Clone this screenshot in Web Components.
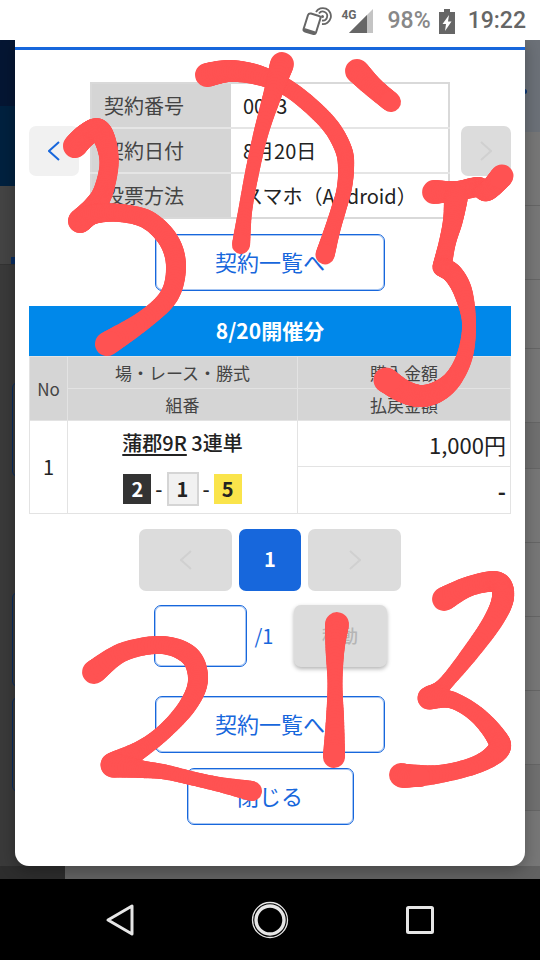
<!DOCTYPE html>
<html lang="ja">
<head>
  <meta charset="UTF-8">
  <meta name="viewport" content="width=device-width, initial-scale=1">
  <title>契約内容</title>
  <style>
    body {
      margin: 0;
      min-height: 100vh;
      display: flex;
      flex-direction: column;
      position: relative;
      background: #fff;
      color: #222;
      font-family: "Noto Sans CJK JP", sans-serif;
      font-size: 20px;
      line-height: 28px;
      --blue: #1767dc;
      --blue-soft: #a8c6f2;
    }

    main {
      flex: 1;
      display: grid;
      overflow: hidden;
    }

    page-backdrop,
    modal-sheet {
      grid-area: 1 / 1;
    }
  </style>
</head>
<body>
  <status-bar battery="98%" time="19:22"></status-bar>
  <main>
    <page-backdrop></page-backdrop>
    <modal-sheet>
      <contract-info number="0003" date="8月20日" method="スマホ（Android）"></contract-info>
      <outline-button>契約一覧へ</outline-button>
      <bet-list>
        <span slot="title">8/20開催分</span>
      </bet-list>
      <page-nav></page-nav>
      <outline-button>契約一覧へ</outline-button>
      <outline-button size="small">閉じる</outline-button>
    </modal-sheet>
  </main>
  <system-nav></system-nav>
  <ink-layer></ink-layer>

  <script>
    class BaseElement extends HTMLElement {
      constructor() {
        super();
        this.attachShadow({ mode: "open" });
      }

      connectedCallback() {
        const template = document.createElement("template");
        template.innerHTML = this.getStyles() + this.getTemplate();
        this.shadowRoot.appendChild(template.content.cloneNode(true));
      }
    }

    class StatusBar extends BaseElement {
      getStyles() {
        return `
          <style>
            :host {
              display: flex;
              justify-content: flex-end;
              align-items: center;
              height: 40px;
              padding: 2px 14px 0;
              box-sizing: border-box;
              font-family: Roboto, sans-serif;
              font-size: 23px;
              font-weight: 500;
              color: #666;
              background: #fff;
            }
            svg { display: block; }
            .signal { display: flex; align-items: flex-start; margin: 0 15px 0 9px; }
            .signal small { font-size: 12px; font-weight: bold; line-height: 12px; }
            .signal svg { margin-left: -8px; }
            .battery { color: #888; margin-right: 8px; }
            time { margin-left: 13px; }
          </style>
        `;
      }

      getTemplate() {
        return `
          <svg width="30" height="30" viewBox="0 0 30 30" fill="none" stroke="#666" stroke-width="2" aria-hidden="true">
            <path d="M9 7.500 L17 10 Q19 10.500 18.400 12.500 L14 26.500 Q13.400 28.500 11.500 28 L3 25.500 Q1 25 1.600 23 L6 9 Q6.800 7 9 7.500 Z"/>
            <path d="M2 23.500 L13 27" stroke-width="3"/>
            <path d="M14 6 A8 8 0 1 1 20 18" stroke-width="1.800"/>
            <path d="M17 7.500 A4.500 4.500 0 1 1 20 14.500" stroke-width="1.800"/>
            <circle cx="20.500" cy="10.500" r="1.500" fill="#666" stroke="none"/>
          </svg>
          <span class="signal">
            <small>4G</small>
            <svg width="24" height="24" viewBox="0 0 24 24" aria-hidden="true">
              <path d="M24 0 V24 H0 Z" fill="#c4c4c4"/>
              <path d="M18 6 V24 H0 Z" fill="#666"/>
            </svg>
          </span>
          <span class="battery">${this.getAttribute("battery")}</span>
          <svg width="16" height="25" viewBox="0 0 16 25" aria-hidden="true">
            <path d="M5 0 H11 V3 H16 V25 H0 V3 H5 Z" fill="#666"/>
            <path d="M10 6 L3.500 15 H7 L6 22 L12.500 12.500 H9 Z" fill="#fff"/>
          </svg>
          <time>${this.getAttribute("time")}</time>
        `;
      }
    }

    // the dimmed page that stays visible around the modal
    class PageBackdrop extends BaseElement {
      getStyles() {
        return `
          <style>
            :host {
              display: grid;
              grid-template-columns: 1fr 1fr;
              grid-template-rows: 1fr 13px;
              background: #666;
            }
            .left, .right { display: flex; flex-direction: column; }
            .left { background: #3a3a3a; }
            .right { background: #777; }
            .left .head { height: 66px; background: #051633; }
            .left .bar { height: 80px; background: #00213f; }
            .left .tabs { height: 79px; background: #444; border-bottom: 1px solid #333; box-sizing: border-box; display: flex; align-items: flex-end; }
            .left .tabs i { height: 7px; flex: 1; margin-left: 11px; background: #092d60; }
            .card { height: 93px; margin-left: 12px; border: 1px solid #092d60; border-radius: 6px; }
            .card.first { margin-top: 117px; }
            .card.second { margin-top: 115px; }
            .card.third { margin-top: 10px; }
            .right .head { display: flex; justify-content: flex-end; height: 92px; background: #6c7178; }
            .right .head i { width: 5px; height: 5px; margin: 49px 13px 0 0; border-radius: 50%; background: #0b3878; }
            .right .row { height: 73px; border-bottom: 1px solid #666; }
            .right .row.short { height: 68px; }
            .right .dark { height: 45px; background: #707070; border-bottom: 1px solid #666; }
            .foot { grid-column: 1 / 3; background: linear-gradient(90deg, #2d2d2d 65px, #626262 65px); }
          </style>
        `;
      }

      getTemplate() {
        return `
          <div class="left">
            <div class="head"></div>
            <div class="bar"></div>
            <div class="tabs"><i></i></div>
            <div class="card first"></div>
            <div class="card second"></div>
            <div class="card third"></div>
          </div>
          <div class="right">
            <div class="head"><i></i></div>
            <div class="row"></div>
            <div class="row"></div>
            <div class="row short"></div>
            <div class="row"></div>
            <div class="dark"></div>
            <div class="row"></div>
            <div class="row"></div>
            <div class="row"></div>
            <div class="row"></div>
            <div class="dark"></div>
          </div>
          <div class="foot"></div>
        `;
      }
    }

    class ModalSheet extends BaseElement {
      getStyles() {
        return `
          <style>
            :host {
              display: block;
              align-self: start;
              margin: 0 15px 13px;
              padding-top: 7px;
              background: #fff;
              border-radius: 0 0 14px 14px;
              box-shadow: 0 4px 16px rgba(0, 0, 0, .3);
            }
            .body {
              display: flex;
              flex-direction: column;
              gap: 15px;
              border-top: 3px solid var(--blue);
              padding: 32px 14px 41px;
            }
          </style>
        `;
      }

      getTemplate() {
        return `<section class="body" role="dialog" aria-label="契約内容"><slot></slot></section>`;
      }
    }

    class ArrowButton extends BaseElement {
      getStyles() {
        return `
          <style>
            :host { display: block; width: 50px; height: 50px; }
            :host([wide]) { width: 93px; height: 62px; }
            button {
              display: grid;
              place-items: center;
              width: 100%;
              height: 100%;
              padding: 0;
              border: none;
              border-radius: 7px;
              background: #f1f1f1;
              color: var(--blue);
            }
            button:disabled { background: #dcdcdc; color: #d0d0d0; }
          </style>
        `;
      }

      getTemplate() {
        const next = this.getAttribute("dir") === "next";
        return `
          <button type="button" aria-label="${next ? "次へ" : "前へ"}" ${this.hasAttribute("disabled") ? "disabled" : ""}>
            <svg width="12" height="20" viewBox="0 0 12 20" fill="none" stroke="currentColor" stroke-width="2" aria-hidden="true">
              <path d="${next ? "M1 1 L11 10 L1 19" : "M11 1 L1 10 L11 19"}"/>
            </svg>
          </button>
        `;
      }
    }

    class ContractInfo extends BaseElement {
      getStyles() {
        return `
          <style>
            :host { display: flex; align-items: center; gap: 11px; }
            table { flex: 1; border-collapse: collapse; border: 2px solid #d9d9d9; }
            tr + tr { border-top: 2px solid #e5e5e5; }
            th, td { height: 43px; padding: 0 12px; text-align: left; font-weight: 400; white-space: nowrap; }
            th { width: 115px; background: #d5d5d5; color: #444; }
          </style>
        `;
      }

      getTemplate() {
        return `
          <arrow-button dir="prev"></arrow-button>
          <table>
            <tr><th scope="row">契約番号</th><td>${this.getAttribute("number")}</td></tr>
            <tr><th scope="row">契約日付</th><td>${this.getAttribute("date")}</td></tr>
            <tr><th scope="row">投票方法</th><td>${this.getAttribute("method")}</td></tr>
          </table>
          <arrow-button dir="next" disabled></arrow-button>
        `;
      }
    }

    class OutlineButton extends BaseElement {
      getStyles() {
        return `
          <style>
            :host { display: block; align-self: center; width: 230px; }
            :host([size="small"]) { width: 167px; }
            button {
              display: block;
              width: 100%;
              height: 57px;
              padding: 0 0 4px;
              border: 1px solid var(--blue);
              border-radius: 7px;
              box-shadow: inset 0 0 0 1px var(--blue-soft);
              background: #fff;
              color: var(--blue);
              font: inherit;
              font-size: 22px;
            }
          </style>
        `;
      }

      getTemplate() {
        return `<button type="button"><slot></slot></button>`;
      }
    }

    class BoatNumber extends BaseElement {
      getStyles() {
        return `
          <style>
            :host {
              display: inline-block;
              width: 28px;
              line-height: 30px;
              font-weight: 700;
              text-align: center;
            }
            :host([boat="1"]) { background: #f1f1f1; border: 2px solid #d5d5d5; }
            :host([boat="2"]) { background: #333; color: #fff; }
            :host([boat="5"]) { background: #fae44b; }
          </style>
        `;
      }

      getTemplate() {
        return `${this.getAttribute("boat")}`;
      }
    }

    class BetList extends BaseElement {
      getStyles() {
        return `
          <style>
            :host { display: block; }
            h2 {
              margin: 0;
              padding-bottom: 2px;
              background: #0088ea;
              color: #fff;
              font-size: 21px;
              font-weight: 700;
              line-height: 48px;
              text-align: center;
            }
            table { width: 100%; table-layout: fixed; border-collapse: collapse; }
            th, td { padding: 0; border: 1px solid #e3e3e3; text-align: center; font-weight: 400; }
            th { height: 31px; background: #d5d5d5; color: #444; font-size: 17px; line-height: 28px; }
            .no { width: 38px; }
            .race { width: 230px; }
            td.money { padding-right: 4px; text-align: right; font-size: 22px; }
            tr.buy td { height: 45px; }
            tr.pay td { height: 46px; }
            .name { font-weight: 500; }
            .name a { color: inherit; text-underline-offset: 3px; }
            .boats { display: flex; justify-content: center; align-items: center; gap: 4px; margin-top: 15px; font-weight: 500; }
            .money b { font-weight: 700; }
          </style>
        `;
      }

      getTemplate() {
        return `
          <h2><slot name="title"></slot></h2>
          <table>
            <colgroup><col class="no"><col class="race"><col></colgroup>
            <thead>
              <tr><th rowspan="2">No</th><th>場・レース・勝式</th><th>購入金額</th></tr>
              <tr><th>組番</th><th>払戻金額</th></tr>
            </thead>
            <tbody>
              <tr class="buy">
                <td rowspan="2">1</td>
                <td rowspan="2">
                  <div class="name"><a href="#race">蒲郡9R</a> 3連単</div>
                  <div class="boats">
                    <boat-number boat="2"></boat-number>-<boat-number boat="1"></boat-number>-<boat-number boat="5"></boat-number>
                  </div>
                </td>
                <td class="money">1,000円</td>
              </tr>
              <tr class="pay"><td class="money"><b>-</b></td></tr>
            </tbody>
          </table>
        `;
      }
    }

    class PageNav extends BaseElement {
      getStyles() {
        return `
          <style>
            :host { display: flex; flex-direction: column; align-items: center; gap: 14px; margin-bottom: 14px; }
            .pages { display: flex; gap: 7px; }
            .jump { display: flex; align-items: center; }
            button { border: none; border-radius: 7px; height: 62px; padding: 0 0 2px; font: inherit; }
            .current { width: 62px; background: var(--blue); color: #fff; font-weight: 700; }
            input {
              width: 93px;
              height: 62px;
              box-sizing: border-box;
              border: 1px solid var(--blue);
              border-radius: 7px;
              box-shadow: inset 0 0 0 1px var(--blue-soft);
              background: #fff;
              font: inherit;
              text-align: center;
            }
            label { width: 29px; padding-left: 8px; margin-right: 10px; color: var(--blue); }
            .go {
              width: 93px;
              background: #dcdcdc;
              color: #b5b5b5;
              font-size: 18px;
              font-weight: 500;
              box-shadow: 0 2px 4px rgba(0, 0, 0, .3);
            }
          </style>
        `;
      }

      getTemplate() {
        return `
          <div class="pages">
            <arrow-button dir="prev" wide disabled></arrow-button>
            <button type="button" class="current" aria-current="page">1</button>
            <arrow-button dir="next" wide disabled></arrow-button>
          </div>
          <div class="jump">
            <input type="text" id="page" inputmode="numeric">
            <label for="page">/1</label>
            <button type="button" class="go" disabled>移動</button>
          </div>
        `;
      }
    }

    class SystemNav extends BaseElement {
      getStyles() {
        return `
          <style>
            :host {
              display: flex;
              justify-content: center;
              align-items: center;
              gap: 110px;
              height: 82px;
              background: #000;
            }
            button { padding: 0; border: none; background: none; height: 40px; }
            svg { display: block; }
          </style>
        `;
      }

      getTemplate() {
        return `
          <button type="button" aria-label="戻る">
            <svg width="40" height="40" viewBox="0 0 40 40" fill="none" stroke="#e6e6e6" stroke-width="3" stroke-linejoin="round" aria-hidden="true">
              <path d="M32 6 V34 L8 20 Z"/>
            </svg>
          </button>
          <button type="button" aria-label="ホーム">
            <svg width="40" height="40" viewBox="0 0 40 40" fill="none" stroke="#e6e6e6" aria-hidden="true">
              <circle cx="20" cy="20" r="17.500" stroke-width="1.300"/>
              <circle cx="20" cy="20" r="14" stroke-width="3.400"/>
            </svg>
          </button>
          <button type="button" aria-label="履歴">
            <svg width="40" height="40" viewBox="0 0 40 40" fill="none" stroke="#e6e6e6" stroke-width="3" aria-hidden="true">
              <rect x="7.500" y="7.500" width="25" height="25" rx="1"/>
            </svg>
          </button>
        `;
      }
    }

    // red marker strokes, each point is [x, y, pen width]
    const STROKES = [
      [[75, 146, 24], [86, 135, 23], [98, 130, 23], [106, 143, 21], [109, 165, 19], [103, 192, 20], [93, 208, 22], [80, 221, 24]],
      [[80, 221, 24], [94, 214, 20], [120, 213, 18], [148, 220, 19], [169, 241, 20], [176, 267, 20], [169, 296, 19], [144, 320, 19], [107, 344, 24]],
      [[207, 75, 24], [230, 71, 22], [258, 75, 20], [286, 87, 17], [311, 106, 17], [332, 128, 17], [344, 151, 17], [346, 170, 16], [344, 190, 15], [339, 208, 15], [332, 231, 16], [325, 255, 19]],
      [[282, 64, 24], [273, 93, 19], [261, 133, 15], [252, 173, 14], [245, 212, 14], [241, 245, 18]],
      [[357, 71, 24], [373, 87, 21], [391, 102, 20]],
      [[434, 192, 24], [457, 191, 20], [478, 187, 20], [487, 191, 20], [502, 176, 23]],
      [[456, 197, 24], [453, 220, 20], [447, 244, 17], [442, 267, 19]],
      [[442, 267, 19], [453, 274, 20], [463, 292, 19], [469, 323, 14], [465, 355, 16], [453, 379, 18], [437, 392, 21], [420, 396, 22], [403, 391, 23], [386, 380, 25]],
      [[94, 672, 24], [123, 652, 19], [162, 645, 18], [190, 656, 20], [198, 680, 20], [188, 705, 18], [165, 731, 16], [140, 750, 18], [113, 765, 25]],
      [[113, 765, 25], [140, 769, 18], [165, 772, 15], [195, 779, 14], [222, 785, 15], [252, 791, 20]],
      [[337, 624, 24], [335, 650, 19], [335, 685, 15], [335, 720, 18], [334, 757, 22]],
      [[444, 599, 24], [470, 586, 20], [497, 582, 21], [503, 597, 22], [493, 621, 20], [468, 656, 17], [443, 686, 15], [429, 698, 23]],
      [[429, 698, 23], [452, 700, 17], [476, 714, 17], [495, 735, 20], [499, 749, 22], [478, 764, 18], [440, 774, 18], [403, 776, 24]],
      [[401, 775, 24], [420, 777, 20]]
    ];

    class InkLayer extends BaseElement {
      getStyles() {
        return `
          <style>
            :host { display: block; position: absolute; inset: 0; pointer-events: none; }
            svg { display: block; width: 100%; }
          </style>
        `;
      }

      // Catmull-Rom between b and c
      curve(a, b, c, d, t) {
        return 0.5 * (2 * b + (c - a) * t + (2 * a - 5 * b + 4 * c - d) * t * t + (3 * b - a - 3 * c + d) * t * t * t);
      }

      getLines(points) {
        const steps = 12;
        let lines = "";
        let last = points[0];
        for (let i = 0; i < points.length - 1; i++) {
          const p = [points[i - 1] || points[i], points[i], points[i + 1], points[i + 2] || points[i + 1]];
          for (let s = 1; s <= steps; s++) {
            const [x, y, w] = [0, 1, 2].map((k) => this.curve(p[0][k], p[1][k], p[2][k], p[3][k], s / steps));
            lines += `<line x1="${last[0]}" y1="${last[1]}" x2="${x}" y2="${y}" stroke-width="${w}"/>`;
            last = [x, y];
          }
        }
        return lines;
      }

      getTemplate() {
        return `
          <svg viewBox="0 0 540 960" stroke="#ff5252" stroke-linecap="round" aria-hidden="true">
            ${STROKES.map((points) => this.getLines(points)).join("")}
          </svg>
        `;
      }
    }

    customElements.define("status-bar", StatusBar);
    customElements.define("page-backdrop", PageBackdrop);
    customElements.define("modal-sheet", ModalSheet);
    customElements.define("arrow-button", ArrowButton);
    customElements.define("contract-info", ContractInfo);
    customElements.define("outline-button", OutlineButton);
    customElements.define("boat-number", BoatNumber);
    customElements.define("bet-list", BetList);
    customElements.define("page-nav", PageNav);
    customElements.define("system-nav", SystemNav);
    customElements.define("ink-layer", InkLayer);
  </script>
</body>
</html>
